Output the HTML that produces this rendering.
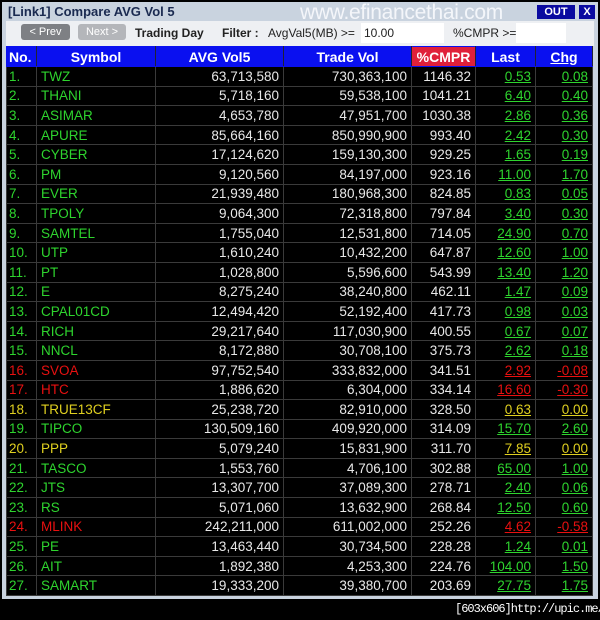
<!DOCTYPE html><html><head><style>
body{margin:0;width:600px;height:620px;background:#000;position:relative;overflow:hidden;font-family:"Liberation Sans",sans-serif}
#win{position:absolute;left:2px;top:2px;width:596px;height:597px;background:#c9d3df;overflow:hidden}
#title{position:absolute;left:6px;top:2px;font:bold 13px "Liberation Sans",sans-serif;color:#1a2a50}
#wm{position:absolute;left:298px;top:-1px;font-size:21px;color:#f4f6fa;letter-spacing:-0.3px}
#out{position:absolute;left:535px;top:3px;width:38px;height:14px;background:#0a0aa0;color:#fff;font:bold 11px "Liberation Sans";text-align:center;line-height:14px}
#x{position:absolute;left:577px;top:3px;width:16px;height:14px;background:#0a0aa0;color:#fff;font:bold 11px "Liberation Sans";text-align:center;line-height:14px}
#tb{position:absolute;left:4px;top:19px;width:588px;height:25px;background:#eef0f3;font-size:12px;color:#222}
.btn{position:absolute;top:3px;height:16px;border-radius:3px;font-size:11px;color:#fff;text-align:center;line-height:16px}
table{position:absolute;left:4px;top:44px;width:586px;table-layout:fixed;border-collapse:collapse;font-size:13.5px;background:#000}
td,th{height:18.6px;padding:0 4px;border:1px solid #3a3a3a;white-space:nowrap;overflow:hidden}
th{background:#0a10f0;color:#fff;font-size:14px;height:19px;border-color:#0a10f0;border-right:1px solid #223}
td{color:#e8e8e8;text-align:right}
td.n,td.s{text-align:left}
.g{color:#2ed42e}.r{color:#e81010}.y{color:#e0d020}
td.u{text-decoration:underline}
#cap{position:absolute;left:455px;top:602px;color:#fff;font:12px "Liberation Mono",monospace;letter-spacing:-1px;white-space:nowrap}
</style></head><body>
<div id="win">
<div id="title">[Link1] Compare AVG Vol 5</div>
<div id="wm">www.efinancethai.com</div>
<div id="out">OUT</div><div id="x">X</div>
<div id="tb">
<div class="btn" style="left:15px;width:49px;background:#7e8084">&lt; Prev</div>
<div class="btn" style="left:72px;width:48px;background:#b4b6ba">Next &gt;</div>
<div style="position:absolute;left:129px;top:5px;font-weight:bold">Trading Day</div>
<div style="position:absolute;left:216px;top:5px;font-weight:bold">Filter :</div>
<div style="position:absolute;left:262px;top:5px">AvgVal5(MB) &gt;=</div>
<div style="position:absolute;left:355px;top:2px;width:80px;height:20px;background:#fff;line-height:20px;padding-left:3px">10.00</div>
<div style="position:absolute;left:447px;top:5px">%CMPR &gt;=</div>
<div style="position:absolute;left:510px;top:2px;width:50px;height:20px;background:#fff"></div>
</div>
<table>
<colgroup><col style="width:30px"><col style="width:119px"><col style="width:128px"><col style="width:128px"><col style="width:64px"><col style="width:60px"><col style="width:57px"></colgroup>
<tr><th style="text-align:left;padding:0 2px">No.</th><th>Symbol</th><th>AVG Vol5</th><th>Trade Vol</th><th style="background:#e0203a">%CMPR</th><th>Last</th><th style="text-decoration:underline">Chg</th></tr>
<tbody id="b"></tbody></table>
</div>
<div id="cap">[603x606]http://upic.me/</div>
<script>
var d=[["TWZ","63,713,580","730,363,100","1146.32","0.53","0.08","g"],["THANI","5,718,160","59,538,100","1041.21","6.40","0.40","g"],["ASIMAR","4,653,780","47,951,700","1030.38","2.86","0.36","g"],["APURE","85,664,160","850,990,900","993.40","2.42","0.30","g"],["CYBER","17,124,620","159,130,300","929.25","1.65","0.19","g"],["PM","9,120,560","84,197,000","923.16","11.00","1.70","g"],["EVER","21,939,480","180,968,300","824.85","0.83","0.05","g"],["TPOLY","9,064,300","72,318,800","797.84","3.40","0.30","g"],["SAMTEL","1,755,040","12,531,800","714.05","24.90","0.70","g"],["UTP","1,610,240","10,432,200","647.87","12.60","1.00","g"],["PT","1,028,800","5,596,600","543.99","13.40","1.20","g"],["E","8,275,240","38,240,800","462.11","1.47","0.09","g"],["CPAL01CD","12,494,420","52,192,400","417.73","0.98","0.03","g"],["RICH","29,217,640","117,030,900","400.55","0.67","0.07","g"],["NNCL","8,172,880","30,708,100","375.73","2.62","0.18","g"],["SVOA","97,752,540","333,832,000","341.51","2.92","-0.08","r"],["HTC","1,886,620","6,304,000","334.14","16.60","-0.30","r"],["TRUE13CF","25,238,720","82,910,000","328.50","0.63","0.00","y"],["TIPCO","130,509,160","409,920,000","314.09","15.70","2.60","g"],["PPP","5,079,240","15,831,900","311.70","7.85","0.00","y"],["TASCO","1,553,760","4,706,100","302.88","65.00","1.00","g"],["JTS","13,307,700","37,089,300","278.71","2.40","0.06","g"],["RS","5,071,060","13,632,900","268.84","12.50","0.60","g"],["MLINK","242,211,000","611,002,000","252.26","4.62","-0.58","r"],["PE","13,463,440","30,734,500","228.28","1.24","0.01","g"],["AIT","1,892,380","4,253,300","224.76","104.00","1.50","g"],["SAMART","19,333,200","39,380,700","203.69","27.75","1.75","g"]];
var h="";d.forEach(function(r,i){var c=r[6];h+='<tr><td class="n '+c+'" style="padding:0 2px">'+(i+1)+'.</td><td class="s '+c+'">'+r[0]+'</td><td>'+r[1]+'</td><td>'+r[2]+'</td><td>'+r[3]+'</td><td class="u '+c+'">'+r[4]+'</td><td class="u '+c+'">'+r[5]+'</td></tr>'});
document.getElementById("b").innerHTML=h;
</script>
</body></html>
